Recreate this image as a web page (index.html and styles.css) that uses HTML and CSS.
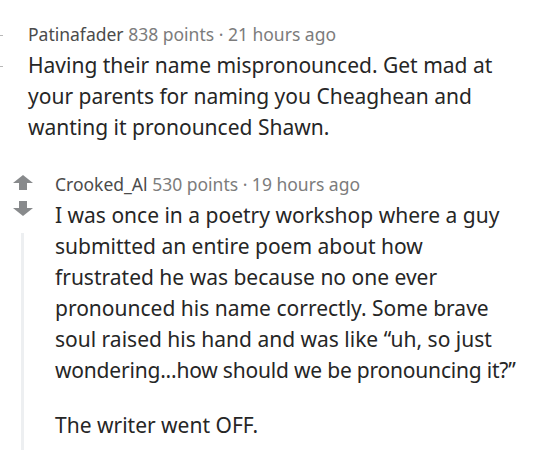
FILE: index.html
```html
<!DOCTYPE html>
<html>
<head>
<meta charset="utf-8">
<link rel="stylesheet" href="styles.css">
</head>
<body>
<div class="comment first">
  <div class="gutter">
    <span class="dot"></span>
    <span class="dot"></span>
  </div>
  <div class="content">
    <div class="meta"><span class="author">Patinafader</span> <span class="info">838 points · 21 hours ago</span></div>
    <div class="body">
      <p>Having their name mispronounced. Get mad at your parents for naming you Cheaghean and wanting it pronounced Shawn.</p>
    </div>
  </div>
</div>
<div class="comment second">
  <div class="gutter">
    <svg class="arrow" width="20" height="15" viewBox="0 0 20 15"><path d="M10 0 L20 8 L14 8 L14 15 L6 15 L6 8 L0 8 Z" fill="#888a8c"/></svg>
    <svg class="arrow down" width="20" height="15" viewBox="0 0 20 15"><path d="M10 15 L20 7 L14 7 L14 0 L6 0 L6 7 L0 7 Z" fill="#888a8c"/></svg>
    <div class="thread"></div>
  </div>
  <div class="content">
    <div class="meta"><span class="author">Crooked_Al</span> <span class="info">530 points · 19 hours ago</span></div>
    <div class="body">
      <p>I was once in a poetry workshop where a guy submitted an entire poem about how frustrated he was because no one ever pronounced his name correctly. Some brave soul raised his hand and was like “uh, so just <span class="nowrap">wondering...how should we be pronouncing it?”</span></p>
      <p>The writer went OFF.</p>
    </div>
  </div>
</div>
</body>
</html>
```
FILE: styles.css
```css
html, body {
  margin: 0;
  padding: 0;
  background: #fff;
}
body {
  font-family: "Noto Sans", "Open Sans", sans-serif;
  color: #1c1c1c;
  width: 541px;
  height: 450px;
  overflow: hidden;
}
.comment {
  display: flex;
}
.first {
  padding-top: 19px;
}
.first .gutter {
  width: 28px;
  display: flex;
  flex-direction: column;
  padding-top: 16px;
  gap: 30px;
}
.dot {
  display: block;
  width: 3px;
  height: 1px;
  background: #b8b8b8;
}
.second {
  padding-top: 26px;
}
.second .gutter {
  width: 55px;
  display: flex;
  flex-direction: column;
  padding-top: 6px;
  padding-left: 13px;
  box-sizing: border-box;
}
.arrow {
  display: block;
}
.arrow.down {
  margin-top: 11px;
}
.thread {
  width: 3px;
  background: #edeff1;
  flex: 1;
  margin-top: 17px;
  margin-left: 8px;
  margin-bottom: -20px;
}
.content {
  flex: none;
}
.meta {
  font-size: 17.5px;
  line-height: 31px;
  height: 31px;
  white-space: nowrap;
}
.author {
  color: #4b4b4b;
}
.info {
  color: #7c7c7c;
}
.body p {
  margin: 0;
  font-size: 21px;
  line-height: 31px;
  color: #262626;
}
.body p + p {
  margin-top: 24px;
}
.nowrap {
  white-space: nowrap;
  letter-spacing: -0.2px;
}
.first .content {
  width: 482px;
}
.second .content {
  width: 456px;
}
```
